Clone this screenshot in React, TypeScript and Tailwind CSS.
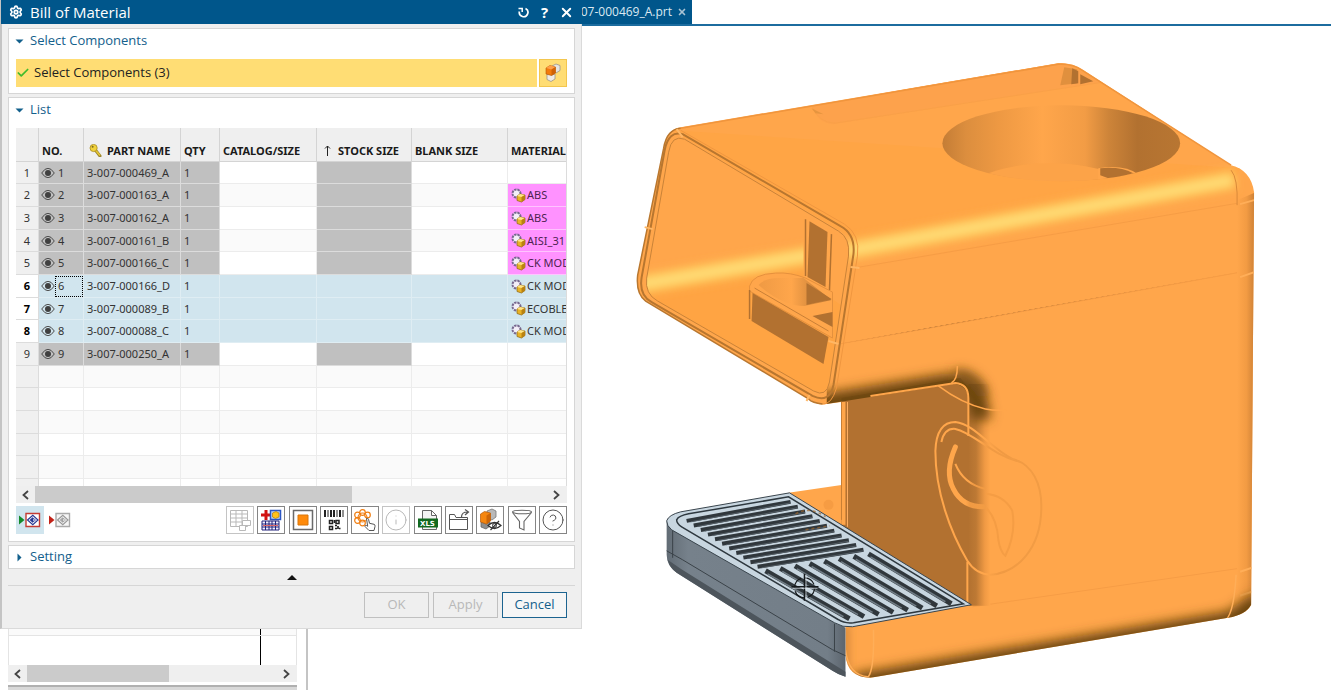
import React, { useState } from "react";
import { Check, HelpCircle, Info, Settings, X } from "lucide-react";
import { clsx } from "clsx";

type Part = {
  no: number;
  name: string;
  qty: number;
  material?: string;
};

const parts: Part[] = [
  { no: 1, name: "3-007-000469_A", qty: 1 },
  { no: 2, name: "3-007-000163_A", qty: 1, material: "ABS" },
  { no: 3, name: "3-007-000162_A", qty: 1, material: "ABS" },
  { no: 4, name: "3-007-000161_B", qty: 1, material: "AISI_31" },
  { no: 5, name: "3-007-000166_C", qty: 1, material: "CK MOD" },
  { no: 6, name: "3-007-000166_D", qty: 1, material: "CK MOD" },
  { no: 7, name: "3-007-000089_B", qty: 1, material: "ECOBLE" },
  { no: 8, name: "3-007-000088_C", qty: 1, material: "CK MOD" },
  { no: 9, name: "3-007-000250_A", qty: 1 },
];

const emptyRows = [9, 10, 11, 12, 13, 14];

const EyeIcon = () => (
  <svg width="14" height="10" viewBox="0 0 14 10" className="shrink-0">
    <path d="M.7 5Q7-4.500 13.300 5Q7 14.500 .7 5Z" fill="none" stroke="#4a4a4a" strokeWidth="1" />
    <circle cx="7" cy="5" r="3" fill="#404040" />
  </svg>
);

const KeyIcon = () => (
  <svg width="13" height="13" viewBox="0 0 13 13" className="shrink-0">
    <path d="M6 5.5l5 6.5" stroke="#9a8530" strokeWidth="3" strokeLinecap="round" />
    <path d="M6 5.5l5 6" stroke="#e6c632" strokeWidth="1.6" />
    <circle cx="4.6" cy="4" r="3.6" fill="#f0d23c" stroke="#a88c20" strokeWidth=".8" />
    <circle cx="3.6" cy="2.8" r="1" fill="#7c6a20" />
  </svg>
);

const ResetIcon = () => (
  <svg width="13" height="13" viewBox="0 0 13 13" fill="none" stroke="currentColor" strokeWidth="1.700">
    <path d="M8.500 2.500A4.300 4.300 0 1 1 2.400 5.500" />
    <path d="M1.500 2.500H5.200V6" strokeWidth="1.500" />
  </svg>
);

const MaterialIcon = () => (
  <svg width="15" height="15" viewBox="0 0 15 15" className="shrink-0">
    <circle cx="5.5" cy="5.5" r="4" fill="#f3eef8" stroke="#77688f" strokeWidth="2" strokeDasharray="2.4 .8" />
    <path d="M6 8l3-2 5 1v4.5L10.500 14 6 12.500z" fill="#e9b224" stroke="#8a6412" strokeWidth=".7" />
    <path d="M6 8l3-2 5 1-3.500 2z" fill="#ffe68a" />
    <path d="M10.500 9L14 7v4.500L10.500 14z" fill="#b98212" />
  </svg>
);

const CubesIcon = () => (
  <svg width="20" height="20" viewBox="0 0 20 20">
    <path d="M9 3l4-2 4 1.500v5l-4 2.500-4-1.500z" fill="#e6e4e0" stroke="#9a938a" strokeWidth=".8" />
    <path d="M4 11l5 1 3-1v5l-4 2.500-4-2z" fill="#efebe6" stroke="#9a938a" strokeWidth=".8" />
    <path d="M3 5l4-2.500L12.500 4v6L8.500 12.500 3 11z" fill="#f27b0c" stroke="#b3590a" strokeWidth=".6" />
    <path d="M3 5l4-2.500L12.500 4 8.500 6.500z" fill="#ffa04a" />
    <path d="M8.500 6.500L12.500 4v6L8.500 12.500z" fill="#cf6207" />
  </svg>
);

const SheetIcon = () => (
  <svg width="24" height="24" viewBox="0 0 24 24" fill="none" stroke="#b9b9b9">
    <path d="M2.500 2.500h17v16h-17zM2.500 6h17M2.500 10h17M2.500 14h17M8 2.500v16M14 2.500v16" />
    <path d="M14.500 12.500h8v5h-8zM11.500 17.500h6v5h-6z" fill="#fff" />
  </svg>
);

const AddSheetIcon = () => (
  <svg width="24" height="24" viewBox="0 0 24 24">
    <path d="M2 7h10M7 2v10" stroke="#d11212" strokeWidth="3" />
    <path d="M11.500 2.500h10v9h-10z" fill="#bcd9fa" stroke="#2b56c4" strokeWidth="1.500" />
    <path d="M13.500 5l3.500-1.500L20 5v4l-3.500 1.500-3-1.500z" fill="#ffc21a" stroke="#b97a06" strokeWidth=".7" />
    <path d="M3 13h17v9H3z" fill="#f0f0ff" stroke="#22227a" />
    <path d="M3 16h17M3 19h17M6.500 13v9M10 13v9M13 13v9M16.500 13v9" stroke="#22227a" />
    <path d="M4 17.500h15" stroke="#d66" />
  </svg>
);

const StockIcon = () => (
  <svg width="24" height="24" viewBox="0 0 24 24">
    <path d="M2.500 2.500h19v19h-19z" fill="#fff" stroke="#6a6a6a" strokeWidth="1.500" />
    <path d="M7 7h10v10H7z" fill="#ff8a0a" stroke="#d9760a" />
  </svg>
);

const BarcodeIcon = () => (
  <svg width="24" height="24" viewBox="0 0 24 24" stroke="#222" fill="none">
    <path d="M3 2v7M9 2v7M12 2v7M18 2v7" strokeWidth="2" />
    <path d="M6 2v7M15 2v7M21 2v7" />
    <path d="M7.500 12.500h3v3h-3zM14 12.500h3v3h-3zM7.500 18.500h3v3h-3z" strokeWidth="1.500" />
    <path d="M13 17.500h2M16 18v3M13 20.500h2M17 20.500h1.500M12.500 12v3" strokeWidth="1.700" />
  </svg>
);

const PickIcon = () => (
  <svg width="24" height="24" viewBox="0 0 24 24" fill="none">
    <g stroke="#f07d10" strokeWidth="1.200">
      <circle cx="9.500" cy="9.500" r="4.500" />
      <circle cx="9.500" cy="4.500" r="2.800" />
      <circle cx="4.500" cy="7" r="2.800" />
      <circle cx="4.500" cy="12.500" r="2.800" />
      <circle cx="9.500" cy="15" r="2.800" />
      <circle cx="14.500" cy="7" r="2.800" />
    </g>
    <path d="M13.500 10.500q1.500-.8 2 .8l1 4 4.500 1q1.500.6 1 2.200l-1 4h-5L12 18.500q0-1.500 1.500-1l1.200.8z" fill="#fff" stroke="#555" />
  </svg>
);

const XlsIcon = () => (
  <svg width="24" height="24" viewBox="0 0 24 24">
    <path d="M6.500 21.500v-19h9l5 5v14z" fill="#f4f4f4" stroke="#666" />
    <path d="M15.500 2.500v5h5z" fill="#fff" stroke="#666" />
    <path d="M2 10.500h20v9H2z" fill="#12691f" />
    <text x="4" y="17.500" fontSize="7" fontWeight="700" fontFamily="DejaVu Sans" fill="#fff">XLS</text>
  </svg>
);

const ExportIcon = () => (
  <svg width="24" height="24" viewBox="0 0 24 24" fill="none" stroke="#555">
    <path d="M2.500 21.500V6.500h5l1.500 3h11.500v12z" />
    <path d="M2.500 11.500h18" />
    <path d="M14.500 9q0-5 6-5M18 1.500L21.500 4 18 7" strokeWidth="1.200" />
  </svg>
);

const HideCubeIcon = () => (
  <svg width="24" height="24" viewBox="0 0 24 24">
    <path d="M9 3l5-2 4 2v6l-4 3-5-2z" fill="#b9b9b9" stroke="#777" strokeWidth=".8" />
    <path d="M3 14l5 2 4-2v4l-4 3-5-2z" fill="#8e8e8e" stroke="#666" strokeWidth=".8" />
    <path d="M2.500 6l4-2.500 6 1.500v8l-4 3-6-2z" fill="#f5860f" stroke="#b3590a" strokeWidth=".7" />
    <path d="M8.500 7.500l4-2.500v8l-4 3z" fill="#cc6507" />
    <path d="M10 17.500q6.500-6 13 0q-6.500 6-13 0z" fill="#fff" stroke="#333" strokeWidth="1.200" />
    <circle cx="16.500" cy="17.500" r="2" fill="none" stroke="#333" />
    <path d="M12.500 22l8.500-9" stroke="#333" strokeWidth="1.200" />
  </svg>
);

const FunnelIcon = () => (
  <svg width="24" height="24" viewBox="0 0 24 24" fill="none" stroke="#666" strokeWidth="1.100">
    <ellipse cx="12" cy="4" rx="9.500" ry="1.800" />
    <path d="M2.500 4.500L9.500 13.500v6.500l4.500 2v-8.500l7.500-9" />
  </svg>
);

const tools = [
  { label: "Export table", icon: <SheetIcon />, disabled: true },
  { label: "Add to table", icon: <AddSheetIcon /> },
  { label: "Stock size", icon: <StockIcon /> },
  { label: "Barcode", icon: <BarcodeIcon /> },
  { label: "Pick attributes", icon: <PickIcon /> },
  { label: "Information", icon: <Info size={24} strokeWidth={1} color="#b9b9b9" />, disabled: true },
  { label: "Export to Excel", icon: <XlsIcon /> },
  { label: "Open folder", icon: <ExportIcon /> },
  { label: "Hide component", icon: <HideCubeIcon /> },
  { label: "Filter", icon: <FunnelIcon /> },
  { label: "Help topics", icon: <HelpCircle size={24} strokeWidth={1} color="#555" /> },
];

const ScopeIcon = ({ active }: { active?: boolean }) => (
  <svg width="22" height="16" viewBox="0 0 22 16">
    <path d="M0 3.500L5.500 8 0 12.500z" fill={active ? "#128a2a" : "#c22218"} />
    <path d="M7 1.500h13.500v13H7z" fill={active ? "#fff" : "#f6f6f6"} stroke={active ? "#c43c34" : "#aaa"} strokeWidth="1.400" />
    <path d="M8.500 8L13.800 3.200 19 8l-5.200 4.800z" fill="none" stroke={active ? "#2a3a94" : "#999"} strokeWidth="1.200" />
    <path d="M10.500 8l3.500-3v6z" fill={active ? "#2a3a94" : "#aaa"} />
    <path d="M14 6l2.500 2L14 10z" fill="#fff" stroke={active ? "#2a3a94" : "#999"} strokeWidth=".8" />
  </svg>
);

const Arrow = ({ right }: { right?: boolean }) => (
  <svg width="7" height="10" viewBox="0 0 7 10" fill="none" stroke="#444" strokeWidth="1.800">
    <path d={right ? "M1 1l4.500 4L1 9" : "M6 1L1.500 5 6 9"} />
  </svg>
);

const ScrollBar = ({ thumb }: { thumb: string }) => (
  <div className="flex h-[17px] shrink-0 bg-[#efefef]">
    <button aria-label="Scroll left" className="grid w-[19px] place-items-center">
      <Arrow />
    </button>
    <div className="flex-1">
      <div className={clsx("h-full bg-[#cbcbcb]", thumb)} />
    </div>
    <button aria-label="Scroll right" className="grid w-[21px] place-items-center">
      <Arrow right />
    </button>
  </div>
);

const SectionTitle = ({ title, open, onClick }: { title: string; open: boolean; onClick: () => void }) => (
  <button
    onClick={onClick}
    className={clsx("flex w-full items-center gap-[6px] pl-[6px] text-[13px] text-[#13608c]", open ? "h-6" : "h-[22px]")}
  >
    <svg width="9" height="9" viewBox="0 0 9 9" fill="#13608c">
      <path d={open ? "M.5 2.500h8L4.500 6.500z" : "M2.500.5v8L6.500 4.500z"} />
    </svg>
    {title}
  </button>
);

const PartsTable = () => {
  const [selected] = useState([6, 7, 8]);
  const th = "border-r border-b border-[#d4d4d4] bg-[#efefef] px-[3px] pt-3 text-left font-bold";
  const td = "border-r border-b px-[3px]";

  // rows average a little under 23px
  const rowHeight = (i: number) => (i % 3 === 0 ? "h-[22px]" : "h-[23px]");

  return (
    <div className="h-[358px] overflow-hidden border-r border-[#dcdcdc]">
      <table className="w-[592px] table-fixed border-separate border-spacing-0 font-['Noto_Sans','DejaVu_Sans',sans-serif] text-[11px] leading-4 whitespace-nowrap text-[#333]">
        <colgroup>
          <col className="w-[23px]" />
          <col className="w-[45px]" />
          <col className="w-[97px]" />
          <col className="w-[39px]" />
          <col className="w-[97px]" />
          <col className="w-[95px]" />
          <col className="w-[96px]" />
          <col className="w-[100px]" />
        </colgroup>
        <thead className="text-[#1a1a1a]">
          <tr className="h-[34px]">
            <th className={th} aria-label="Row" />
            <th className={th}>NO.</th>
            <th className={th}>
              <span className="flex items-center gap-[5px] pl-[2px]">
                <KeyIcon />
                PART NAME
              </span>
            </th>
            <th className={th}>QTY</th>
            <th className={th}>CATALOG/SIZE</th>
            <th className={th}>
              <span className="flex items-center gap-[7px] pl-1">
                <svg width="7" height="11" viewBox="0 0 7 11" fill="none" stroke="#222">
                  <path d="M3.500 11V1M1 3.500L3.500 1 6 3.500" />
                </svg>
                STOCK SIZE
              </span>
            </th>
            <th className={th}>BLANK SIZE</th>
            <th className={th}>MATERIAL</th>
          </tr>
        </thead>
        <tbody>
          {parts.map((part, i) => {
            const isSelected = selected.includes(part.no);
            const locked = isSelected ? "bg-[#d1e5ee] border-[#dfedf3]" : "bg-[#c0c0c0] border-[#dcdcdc]";
            const open = isSelected
              ? "bg-[#d1e5ee] border-[#dfedf3]"
              : clsx("border-[#ececec]", i % 2 ? "bg-[#fafafa]" : "bg-white");
            return (
              <tr key={part.no} className={rowHeight(i)}>
                <td
                  className={clsx(
                    "border-r border-b border-[#dcdcdc] text-center",
                    isSelected ? "bg-white font-bold text-black" : "bg-[#f0f0f0]"
                  )}
                >
                  {part.no}
                </td>
                <td className={clsx("border-r border-b pl-[2px]", locked)}>
                  <span className="flex items-center">
                    <EyeIcon />
                    <span
                      className={clsx(
                        "flex h-[21px] flex-1 items-center pl-[3px]",
                        part.no === 6 && "outline-1 -outline-offset-1 outline-dotted outline-black"
                      )}
                    >
                      {part.no}
                    </span>
                  </span>
                </td>
                <td className={clsx(td, locked)}>{part.name}</td>
                <td className={clsx(td, locked)}>{part.qty}</td>
                <td className={clsx(td, open)} />
                <td className={clsx(td, locked)} />
                <td className={clsx(td, open)} />
                <td
                  className={clsx(
                    td,
                    part.material && !isSelected ? "border-[#ffc4ff] bg-[#ff92ff] text-[#4c2350]" : open
                  )}
                >
                  {part.material && (
                    <span className="flex items-center gap-px">
                      <MaterialIcon />
                      {part.material}
                    </span>
                  )}
                </td>
              </tr>
            );
          })}
          {emptyRows.map((i) => (
            <tr key={i} className={rowHeight(i)}>
              <td className="border-r border-b border-[#dcdcdc] bg-[#f0f0f0]" />
              {[1, 2, 3, 4, 5, 6, 7].map((c) => (
                <td key={c} className={clsx("border-r border-b border-[#ececec]", i % 2 ? "bg-[#fafafa]" : "bg-white")} />
              ))}
            </tr>
          ))}
        </tbody>
      </table>
    </div>
  );
};

const BillOfMaterialDialog = () => {
  const [selectOpen, setSelectOpen] = useState(true);
  const [listOpen, setListOpen] = useState(true);
  const [settingOpen, setSettingOpen] = useState(false);
  const card = "border border-[#d6d6d6] bg-white";
  const action = "h-[26px] w-[65px] border text-[13px]";

  return (
    <section
      aria-label="Bill of Material"
      className="absolute top-0 left-0 z-10 w-[582px] border-r border-b border-l-2 border-[#dadada] border-l-[#c4c4c4] bg-[#efefef]"
    >
      <header className="-mr-px -ml-px flex h-6 items-center bg-[#00568b] pl-2 text-white">
        <Settings size={14} strokeWidth={3} />
        <h1 className="flex-1 pl-[7px] text-[15px]">Bill of Material</h1>
        <div className="flex items-center pr-[5px]">
          <button aria-label="Reset" className="grid w-[21px] place-items-center">
            <ResetIcon />
          </button>
          <button aria-label="Help" className="w-[21px] text-[15px] font-bold">?</button>
          <button aria-label="Close" className="grid w-[22px] place-items-center">
            <X size={15} strokeWidth={3} />
          </button>
        </div>
      </header>

      <div className="flex flex-col gap-[3px] px-[6px] pt-1">
        <div className={card}>
          <SectionTitle title="Select Components" open={selectOpen} onClick={() => setSelectOpen(!selectOpen)} />
          {selectOpen && (
            <div className="flex gap-[2px] px-[7px] pt-[6px] pb-[6px]">
              <button className="flex h-7 flex-1 items-center gap-1 bg-[#ffdd74] text-[13px] text-[#222]">
                <Check size={14} strokeWidth={3} color="#3fbb2c" />
                Select Components (3)
              </button>
              <button aria-label="Pick components" className="grid size-7 place-items-center border border-[#f3c64e] bg-[#ffdd74]">
                <CubesIcon />
              </button>
            </div>
          )}
        </div>

        <div className={card}>
          <SectionTitle title="List" open={listOpen} onClick={() => setListOpen(!listOpen)} />
          {listOpen && (
            <div className="px-[7px] pt-[6px] pb-[7px]">
              <PartsTable />
              <ScrollBar thumb="w-[62%]" />
              <div className="flex items-center justify-between pt-[3px]">
                <div className="flex">
                  <button aria-label="Show all levels" className="grid size-7 place-items-center bg-[#d1e5ee]">
                    <ScopeIcon active />
                  </button>
                  <button aria-label="Show one level" className="grid w-8 place-items-center">
                    <ScopeIcon />
                  </button>
                </div>
                <div className="flex w-[341px] justify-between">
                  {tools.map((tool) => (
                    <button
                      key={tool.label}
                      aria-label={tool.label}
                      disabled={tool.disabled}
                      className={clsx(
                        "grid size-7 place-items-center border bg-white",
                        tool.disabled ? "border-[#c4c4c4]" : "border-[#858585]"
                      )}
                    >
                      {tool.icon}
                    </button>
                  ))}
                </div>
              </div>
            </div>
          )}
        </div>

        <div className={card}>
          <SectionTitle title="Setting" open={settingOpen} onClick={() => setSettingOpen(!settingOpen)} />
        </div>
      </div>

      <button aria-label="Collapse" className="flex h-4 w-full items-center justify-center">
        <svg width="10" height="5" viewBox="0 0 10 5">
          <path d="M0 5L5 0l5 5z" fill="#111" />
        </svg>
      </button>
      <footer className="mx-[6px] flex justify-end gap-1 border-t border-[#d6d6d6] pt-[6px] pr-2 pb-[10px]">
        <button disabled className={clsx(action, "border-[#c0c0c0] text-[#b8b8b8]")}>OK</button>
        <button disabled className={clsx(action, "border-[#c0c0c0] text-[#b8b8b8]")}>Apply</button>
        <button className={clsx(action, "border-[#1d6490] bg-[#f6f6f6] text-[#13608c]")}>Cancel</button>
      </footer>
    </section>
  );
};

const lerp = (a: number, b: number, t: number) => a + (b - a) * t;

// slots in the back half of the drip grid
const backSlots = Array.from({ length: 11 }, (_, i) => {
  const t = i / 10;
  return { x1: lerp(686, 757, t), y1: lerp(521, 567, t), x2: lerp(790, 863, t), y2: lerp(502, 550, t) };
});

// slots in the front half, running the other way
const frontSlots = Array.from({ length: 8 }, (_, i) => {
  const t = i / 7;
  return { x1: lerp(765, 868, t), y1: lerp(571, 554, t), x2: lerp(849, 951, t), y2: lerp(619, 604, t) };
});

const bodyPath =
  "M680 127L810 105L1058 63Q1072 62 1082 69L1102 82L1231 165Q1251 170 1254 192L1251 605Q1246 615 1228 618L870 678Q847 678 845 655V628L788 493L841 485V402L826 404Q818 406 810 400L645 301Q635 294 637 275L663 148Q666 129 680 127Z";

const mouthPath =
  "M684 139L838 231Q850 238 848 256L829 382Q826 398 813 391L657 301Q644 294 646 278L668 152Q671 134 684 139Z";

const CoffeeMachine = () => (
  <svg viewBox="307 26 1024 664" className="h-full w-full" role="img" aria-label="Coffee machine assembly">
    <defs>
      <clipPath id="body"><path d={bodyPath} /></clipPath>
      <clipPath id="mouth"><path d={mouthPath} /></clipPath>
      <clipPath id="hole"><ellipse cx="1061" cy="143" rx="119" ry="38" /></clipPath>
      <clipPath id="under"><path d="M826 300H1100V612H968V398Q966 384 952 384L826 404Z" /></clipPath>
      <clipPath id="base"><path d="M845 628L972 606L1240 565H1260V690H845Z" /></clipPath>
      <filter id="soft4" filterUnits="userSpaceOnUse" x="600" y="26" width="731" height="664">
        <feGaussianBlur stdDeviation="4" />
      </filter>
      <filter id="soft6" filterUnits="userSpaceOnUse" x="600" y="26" width="731" height="720">
        <feGaussianBlur stdDeviation="6" />
      </filter>
      <linearGradient id="holeFill">
        <stop offset="0" stopColor="#c47d36" />
        <stop offset=".1" stopColor="#dc8e3e" />
        <stop offset=".24" stopColor="#ee9943" />
        <stop offset=".42" stopColor="#ffa64b" />
        <stop offset=".6" stopColor="#f29c45" />
        <stop offset=".7" stopColor="#cd8439" />
        <stop offset=".82" stopColor="#b27130" />
        <stop offset="1" stopColor="#b87632" />
      </linearGradient>
      <linearGradient id="edge">
        <stop offset="0" stopColor="#ffa64b" />
        <stop offset=".5" stopColor="#f29b43" />
        <stop offset="1" stopColor="#c67c34" />
      </linearGradient>
      <linearGradient id="column">
        <stop offset="0" stopColor="#b27130" />
        <stop offset=".35" stopColor="#bd7934" />
        <stop offset=".75" stopColor="#f09a44" />
        <stop offset="1" stopColor="#ffa64b" />
      </linearGradient>
      <linearGradient id="handle">
        <stop offset="0" stopColor="#ffa64b" />
        <stop offset=".48" stopColor="#ffa64b" />
        <stop offset=".6" stopColor="#f09a43" />
        <stop offset="1" stopColor="#f29c44" />
      </linearGradient>
      <linearGradient id="cup">
        <stop offset="0" stopColor="#ef9a44" />
        <stop offset=".45" stopColor="#ffa64b" />
        <stop offset="1" stopColor="#b27130" />
      </linearGradient>
      <linearGradient id="tray">
        <stop offset="0" stopColor="#626c75" />
        <stop offset=".12" stopColor="#76818b" />
        <stop offset=".9" stopColor="#737e88" />
        <stop offset="1" stopColor="#5c656e" />
      </linearGradient>
    </defs>

    <path d={bodyPath} fill="#ffa64b" />

    {/* top face and the lit front edge */}
    <path d="M672 130L1240 168L1236 178L855 240Z" fill="#ffa545" clipPath="url(#body)" />
    <g clipPath="url(#body)">
      <path d="M845 251L1235 179" stroke="#ffbf55" strokeWidth="20" filter="url(#soft4)" />
      <path d="M845 251L1232 180" stroke="#ffe07a" strokeWidth="9" filter="url(#soft4)" />
      <path d="M812 106Q816 122 832 124L1102 82L1060 60Z" fill="#fda24c" />
      <path d="M812 107Q818 122 834 123L1102 82" fill="none" stroke="#f9a148" strokeWidth="1" />
      <path d="M811 108l12 6-8-1z" fill="#e5953f" />
    </g>
    <path d="M680 128L1058 64Q1072 63 1082 70L1231 165" fill="none" stroke="#f0953d" strokeWidth="1.500" />
    <path d="M1064 67L1077 69V83L1060 85Z" fill="#e0903e" />
    <path d="M1072 68L1078 71V83L1071 84Z" fill="#b27130" />
    <path d="M1080 74L1093 81L1080 84Z" fill="#b27130" />

    {/* bean hopper opening */}
    <ellipse cx="1061" cy="143" rx="119" ry="38" fill="url(#holeFill)" />
    <g clipPath="url(#hole)">
      <ellipse cx="1050" cy="205" rx="95" ry="42" fill="#fca348" />
      <path d="M1098 190V168Q1124 164 1138 174L1120 190Z" fill="#ffa64b" />
      <path d="M1100 168Q1120 166 1133 173L1111 179L1100 175Z" fill="#b27130" />
    </g>

    {/* side panel seams */}
    <path d="M853 268L1238 203" stroke="#f69d45" strokeWidth="1" />
    <path d="M833 345L930 328L1252 270" stroke="#f69d45" strokeWidth="1" />
    <path d="M972 607L1250 567" stroke="#f69d45" strokeWidth="1" />
    <g clipPath="url(#body)">
      <path d="M1237 200L1256 192V612H1237Z" fill="url(#edge)" />
      <path d="M1231 170Q1238 178 1237 205" fill="none" stroke="#d98a39" strokeWidth="1" />
      <path d="M1240 204l14-4M1240 277l14-5M1240 572l12-4M1240 596l12-4" stroke="#ffae58" strokeWidth="2" />
    </g>

    {/* recess under the head */}
    <path d="M841 398L960 378L970 390V606L841 526Z" fill="#b27130" />
    <path d="M968 384H990V606H968Z" fill="url(#column)" />
    <g clipPath="url(#under)">
      <path d="M790 409L945 384Q978 380 980 420" fill="none" stroke="#6b4411" strokeWidth="20" filter="url(#soft6)" />
      <path d="M955 374Q976 374 984 396" fill="none" stroke="#704819" strokeWidth="8" filter="url(#soft6)" />
    </g>
    <path d="M843 402V525" stroke="#ffa64b" strokeWidth="4" />
    <path d="M847 402V527" stroke="#ffb062" strokeWidth="1" />
    <path d="M841 402V520" stroke="#c77e34" strokeWidth="1" />
    <path d="M870 396L955 383Q968 384 968 398V436M967 562V606" fill="none" stroke="#ffa64b" strokeWidth="2" />
    <path d="M938 386Q962 404 985 409Q995 411 1006 410M957 366Q957 380 951 383" fill="none" stroke="#ffa64b" strokeWidth="1.500" />

    {/* raised emblem on the side */}
    <g fill="none" stroke="url(#handle)" strokeWidth="2">
      <path d="M967 561C950 532 935 492 935 451Q936 422 955 422C974 424 990 448 1012 459C1032 464 1042 484 1041 510C1040 548 1018 573 990 575Q975 574 967 561Z" />
      <path d="M941 442Q944 428 955 429C974 433 992 456 1020 462" />
      <path d="M955 447Q944 472 953 489Q962 507 983 507" strokeWidth="5" strokeLinecap="round" />
      <path d="M955 464Q963 484 985 489" />
      <path d="M986 494Q1004 496 1012 511Q1016 534 1005 556Q1000 552 998 540Q997 520 986 508" stroke="#f59d44" />
    </g>

    {/* front opening */}
    <path d={mouthPath} fill="#ffa64b" />
    <g clipPath="url(#mouth)">
      <path d="M640 310L650 286L806 254L860 250V420H640Z" fill="#ffa443" />
      <path d="M630 286L830 252" stroke="#ffbf55" strokeWidth="20" filter="url(#soft4)" />
      <path d="M630 286L815 254" stroke="#ffe07a" strokeWidth="9" filter="url(#soft4)" />
      <path d="M803 215L850 242V312L803 278Z" fill="#ffa64b" />
      <path d="M809 221L827 232L825 287L807 277Z" fill="#b27130" />
      <path d="M805 219V276M831 234L829 290" stroke="#b27130" strokeWidth="1.500" />
      <path d="M749 286Q752 274 775 273Q790 272 805 278L832 292V338L749 291Z" fill="#ffa64b" stroke="#e5913d" strokeWidth="1" />
      <path d="M758 285Q764 278 778 278H803L831 300L804 306Q782 306 758 285Z" fill="url(#cup)" />
      <path d="M806 283L831 299L806 305Z" fill="#b27130" />
      <path d="M812 316L832 312V327Z" fill="#b27130" />
      <path d="M752 293L828 337L823 364L751 321Z" fill="#b27130" />
      <path d="M749 290V319" stroke="#b27130" strokeWidth="1.500" />
      <path d="M754 288L828 331" stroke="#c98036" strokeWidth="1" />
    </g>
    <path d={mouthPath} fill="none" stroke="#c98338" strokeWidth="1" />
    <path
      d="M682 134L840 226Q855 234 853 254L833 385Q829 404 812 396L651 302Q638 295 641 277L664 150Q668 130 682 134Z"
      fill="none"
      stroke="#b8762f"
      strokeWidth="2"
    />
    <path d="M680 130L844 224Q860 234 857 256L836 388Q831 405 822 404" fill="none" stroke="#f0973f" strokeWidth="1" />
    <path d="M822 404Q812 403 808 399L645 301Q635 294 637 275L663 148Q666 129 680 128" fill="none" stroke="#b9772f" strokeWidth="1.500" />
    <path d="M644 227l8 2M828 341l10 3M850 267l9 1M809 395l-3 6M676 129l6 8" stroke="#ffb765" strokeWidth="2" />

    {/* base */}
    <g clipPath="url(#base)">
      <g clipPath="url(#body)">
        <path d="M855 685L1232 622L1260 602" fill="none" stroke="#6b4411" strokeWidth="22" filter="url(#soft6)" />
        <path d="M845 625V680" stroke="#c98036" strokeWidth="6" filter="url(#soft4)" />
        <path d="M845 650Q848 676 868 677Q874 668 873 630" fill="none" stroke="#ffae58" strokeWidth="1.500" />
        <path d="M1226 620Q1234 612 1236 575" fill="none" stroke="#ffae58" strokeWidth="1.500" />
      </g>
    </g>
    <circle cx="828" cy="505" r="5" fill="#f0963e" opacity=".6" />

    {/* drip tray */}
    <path d="M666 522L845 628V677Q838 675 832 671L676 573Q666 566 666 555Z" fill="url(#tray)" />
    <path d="M667 560Q669 568 676 573L832 671Q838 675 845 677V672L680 569Z" fill="#4d555c" />
    <path d="M666 551L682 560L832 650L845 656M672 530V558M834 624V652" fill="none" stroke="#3a4248" strokeWidth="1" />
    <path d="M666 521Q668 515 680 512L789 493L971 605L852 627Q842 628 834 623L671 530Q666 526 666 521Z" fill="#c8d6e0" stroke="#39444c" strokeWidth="1" />
    <path d="M676 520Q678 516 688 514L788 497L963 604L853 623Q844 624 838 620L681 527Q676 524 676 520Z" fill="none" stroke="#2e383f" strokeWidth="1.500" />
    {backSlots.map((s, i) => (
      <g key={i}>
        <line {...s} stroke="#30373c" strokeWidth="4" />
        <line x1={s.x1 + 4} y1={s.y1 + 1} x2={s.x2} y2={s.y2 + 1} stroke="#535d65" strokeWidth="1" />
      </g>
    ))}
    {frontSlots.map((s, i) => (
      <g key={i}>
        <line {...s} stroke="#30373c" strokeWidth="5" />
        <line x1={s.x1 + 2} y1={s.y1 + 3} x2={s.x2 - 6} y2={s.y2 - 2} stroke="#707c85" strokeWidth="1.500" />
      </g>
    ))}
    <path d="M795 514q14-8 30 3M805 530l24-4" fill="none" stroke="#a0662c" strokeWidth="1.500" strokeDasharray="3 3" opacity=".7" />

    {/* rotate cursor */}
    <g fill="none" stroke="#15191c">
      <circle cx="804" cy="588" r="10" strokeWidth="1.200" strokeDasharray="12 3.700" />
      <path d="M791 587H818M804 574V601" strokeWidth="1.600" />
    </g>
    <path d="M792 588.500H817M805.500 575V600" stroke="#dfe8ee" strokeWidth=".7" />
  </svg>
);

const LeftPanel = () => (
  <aside className="flex w-[308px] flex-col justify-end border-r-2 border-[#c4c4c4] bg-white pr-[9px] pl-2">
    <div className="flex h-[10px] justify-end border-x border-[#e4e4e4] bg-[#fafafa] pr-[35px]">
      <div className="w-px bg-black" />
    </div>
    <div className="flex h-[30px] justify-end border-x border-t border-[#e4e4e4] pr-[35px]">
      <div className="w-px bg-black" />
    </div>
    <ScrollBar thumb="w-[57%]" />
    <div className="mt-[3px] h-[5px] border-t-2 border-[#b0b0b0] bg-[#d8d8d8]" />
  </aside>
);

export default function App() {
  return (
    <div className="relative flex min-h-screen flex-col bg-white font-['Open_Sans','Noto_Sans',sans-serif]">
      <nav className="flex h-[26px] border-b-2 border-[#1c6c9f]">
        <div className="flex w-[692px] items-center justify-end gap-[5px] bg-[#00568b] pr-[5px] text-[12px] text-[#dbe9f2]">
          <a href="#part">3-007-000469_A.prt</a>
          <button aria-label="Close tab">
            <X size={10} strokeWidth={4} color="#a9c3d4" />
          </button>
        </div>
      </nav>
      <div className="flex flex-1">
        <LeftPanel />
        <main className="min-w-0 flex-1">
          <CoffeeMachine />
        </main>
      </div>
      <BillOfMaterialDialog />
    </div>
  );
}
